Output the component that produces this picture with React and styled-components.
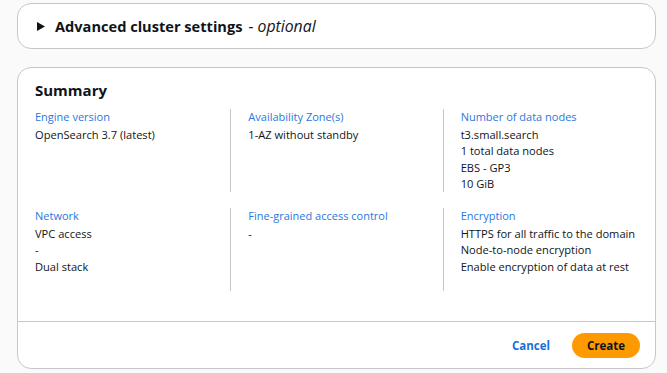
import React from "react";
import styled, { createGlobalStyle } from "styled-components";

const GlobalStyle = createGlobalStyle`
  html, body {
    margin: 0;
    padding: 0;
    background: #fafafa;
  }
  body {
    font-family: "Open Sans", "Noto Sans", Arial, sans-serif;
    color: #0f141a;
  }
`;

const Page = styled.div`
  display: flex;
  flex-direction: column;
  gap: 18px;
  padding: 3px 11px 0 17px;
`;

const Card = styled.div`
  background: #ffffff;
  border: 1px solid #c6c6cd;
  border-radius: 14px;
`;

const ExpandHeader = styled.div`
  display: flex;
  align-items: center;
  gap: 10px;
  height: 44px;
  padding: 0 19px;
`;

const ExpandTitle = styled.div`
  font-size: 14.6px;
  font-weight: 700;

  em {
    font-size: 15.8px;
    font-weight: 400;
    font-style: italic;
    margin-left: 6px;
  }
`;

const Header = styled.div`
  padding: 12px 17px 0;
  height: 29px;
`;

const Heading = styled.h2`
  margin: 0;
  font-size: 15px;
  line-height: 20px;
  font-weight: 700;
`;

const Grid = styled.div`
  display: grid;
  grid-template-columns: repeat(3, 1fr);
  grid-auto-rows: 1fr;
  row-gap: 16px;
  padding-bottom: 30px;
`;

const Cell = styled.div`
  padding: 0 10px 0 17px;
  border-left: ${(p) => (p.$first ? "none" : "1px solid #c6c6cd")};
`;

const Label = styled.div`
  color: #2a78de;
  font-size: 11px;
  line-height: 16px;
  margin-bottom: 2px;
`;

const Value = styled.div`
  font-size: 11.1px;
  line-height: 16.3px;
`;

const Footer = styled.div`
  display: flex;
  align-items: center;
  justify-content: flex-end;
  gap: 6px;
  height: 46px;
  padding: 0 15px;
  border-top: 1px solid #c6c6cd;
`;

const LinkButton = styled.button`
  border: none;
  background: none;
  color: #1a6fdc;
  font-family: inherit;
  font-size: 11.5px;
  font-weight: 700;
  padding: 0 16px;
  height: 25px;
  cursor: pointer;
`;

const PrimaryButton = styled.button`
  border: none;
  background: #ff9900;
  color: #0f141a;
  font-family: inherit;
  font-size: 11.5px;
  font-weight: 700;
  border-radius: 13px;
  width: 68px;
  height: 25px;
  cursor: pointer;
`;

const rows = [
  [
    { label: "Engine version", values: ["OpenSearch 3.7 (latest)"] },
    { label: "Availability Zone(s)", values: ["1-AZ without standby"] },
    {
      label: "Number of data nodes",
      values: ["t3.small.search", "1 total data nodes", "EBS - GP3", "10 GiB"],
    },
  ],
  [
    { label: "Network", values: ["VPC access", "-", "Dual stack"] },
    { label: "Fine-grained access control", values: ["-"] },
    {
      label: "Encryption",
      values: [
        "HTTPS for all traffic to the domain",
        "Node-to-node encryption",
        "Enable encryption of data at rest",
      ],
    },
  ],
];

const Caret = () => (
  <svg width="8" height="9" viewBox="0 0 8 9">
    <polygon points="0,0 8,4.5 0,9" fill="#0f141a" />
  </svg>
);

const App = () => {
  return (
    <>
      <GlobalStyle />
      <Page>
        <Card>
          <ExpandHeader>
            <Caret />
            <ExpandTitle>
              Advanced cluster settings<em>- optional</em>
            </ExpandTitle>
          </ExpandHeader>
        </Card>
        <Card>
          <Header>
            <Heading>Summary</Heading>
          </Header>
          <Grid>
            {rows.flat().map((item, i) => (
              <Cell key={item.label} $first={i % 3 === 0}>
                <Label>{item.label}</Label>
                {item.values.map((v, j) => (
                  <Value key={j}>{v}</Value>
                ))}
              </Cell>
            ))}
          </Grid>
          <Footer>
            <LinkButton>Cancel</LinkButton>
            <PrimaryButton>Create</PrimaryButton>
          </Footer>
        </Card>
      </Page>
    </>
  );
};

export default App;
